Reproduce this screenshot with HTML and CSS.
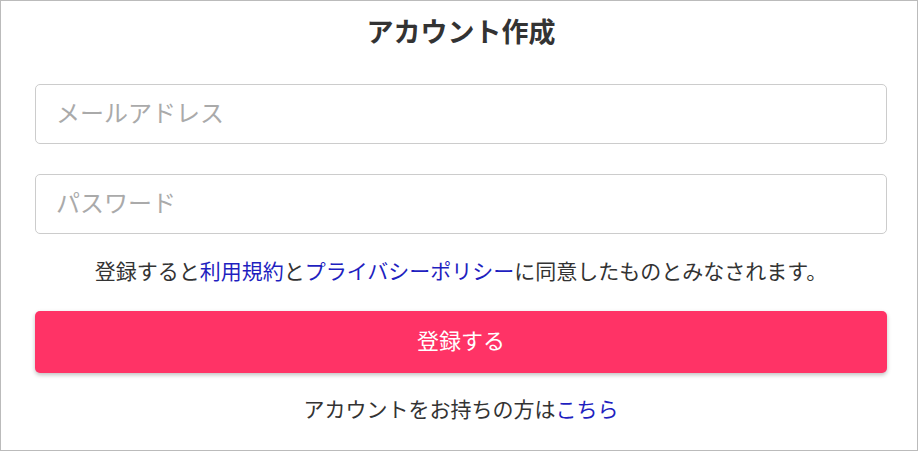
FILE: index.html
```html
<!DOCTYPE html>
<html lang="ja">
<head>
    <meta charset="UTF-8">
    <meta name="viewport" content="width=device-width, initial-scale=1.0">
    <title>アカウント作成</title>
    <link rel="stylesheet" href="styles.css">
</head>
<body>
    <div class="page">
        <h1 class="title">アカウント作成</h1>
        <form class="signup-form">
            <input type="email" class="text-input" placeholder="メールアドレス">
            <input type="password" class="text-input" placeholder="パスワード">
            <p class="terms">登録すると<a href="#">利用規約</a>と<a href="#">プライバシーポリシー</a>に同意したものとみなされます。</p>
            <button type="button" class="submit-button">登録する</button>
            <p class="login-link">アカウントをお持ちの方は<a href="#">こちら</a></p>
        </form>
    </div>
</body>
</html>
```

FILE: styles.css
```css
body {
    margin: 0;
    font-family: "Noto Sans CJK JP", "Noto Sans", sans-serif;
    color: #333;
    background: #fff;
}

.page {
    box-sizing: border-box;
    width: 918px;
    height: 451px;
    border: 1px solid #bbb;
    padding: 10px 30px 0 34px;
}

.title {
    margin: 0;
    font-size: 27px;
    line-height: 40px;
    font-weight: 700;
    text-align: center;
    color: #333;
}

.signup-form {
    display: flex;
    flex-direction: column;
    margin-top: 33px;
}

.text-input {
    box-sizing: border-box;
    height: 60px;
    width: 100%;
    margin: 0 0 30px;
    padding: 0 20px 6px;
    border: 1px solid #ccc;
    border-radius: 5px;
    font-family: inherit;
    font-size: 24px;
    color: #333;
    outline: none;
}

.text-input::placeholder {
    color: #aaa;
}

.text-input + .text-input {
    margin-bottom: 21px;
}

.terms,
.login-link {
    margin: 0;
    font-size: 21px;
    line-height: 30px;
    text-align: center;
    color: #333;
}

.terms a,
.login-link a {
    color: #1f1fc0;
    text-decoration: none;
}

.submit-button {
    height: 62px;
    margin-top: 26px;
    padding-bottom: 7px;
    border: none;
    border-radius: 5px;
    background: #ff3366;
    color: #fff;
    font-family: inherit;
    font-size: 22px;
    box-shadow: 0 2px 4px rgba(0, 0, 0, 0.25);
    cursor: pointer;
}

.login-link {
    margin-top: 20px;
}
```
